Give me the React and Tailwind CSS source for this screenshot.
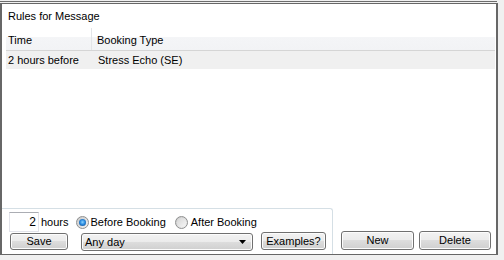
import React from "react";

const font = { fontFamily: '"Liberation Sans", Arial, sans-serif' };

const btn =
  "flex items-center justify-center rounded-[3px] border border-[#707070] bg-[linear-gradient(to_bottom,#f2f2f2_0%,#ebebeb_50%,#dddddd_50%,#cfcfcf_100%)] text-[11px] text-black shadow-[inset_0_0_0_1px_#fcfcfc]";

const Radio = ({ checked }) => (
  <div className="flex h-[13px] w-[13px] items-center justify-center rounded-full border border-[#8e8f8f] bg-[linear-gradient(135deg,#c8c8c8_0%,#f4f4f4_100%)]">
    {checked ? (
      <div className="h-[7px] w-[7px] rounded-full bg-[radial-gradient(circle_at_50%_45%,#8ad4ff_0%,#2b8be0_45%,#0d3f7a_100%)]" />
    ) : (
      <div className="h-[9px] w-[9px] rounded-full bg-[linear-gradient(135deg,#d6d6d6_0%,#f6f6f6_100%)]" />
    )}
  </div>
);

const App = () => {
  return (
    <div className="h-[260px] w-[504px] overflow-hidden bg-[#f0f0f0] leading-[13px]" style={font}>
      <div className="mt-px h-px w-[497px] bg-[#6d6d6d]" />
      <div className="mt-px flex h-[252px] w-[498px] flex-col border-x-2 border-y border-[#676767] bg-white">
        {/* Title */}
        <div className="h-[24px] pl-[6px] pt-[6px] text-[11px] text-black">Rules for Message</div>

        {/* List */}
        <div className="ml-[4px] mr-[1px] flex-1 text-[11px] text-black">
          <div className="flex h-[23px] border-b border-[#d5d5d5] bg-[linear-gradient(to_bottom,#ffffff_0%,#ffffff_40%,#f4f5f7_40%,#f2f3f5_100%)]">
            <div className="flex w-[86px] items-center border-r border-[#e3e5e8] pl-[2px] pt-[2px]">Time</div>
            <div className="flex items-center pl-[5px] pt-[2px]">Booking Type</div>
          </div>
          <div className="flex h-[18px] items-center bg-[#f0f0f0]">
            <div className="w-[87px] pl-[2px]">2 hours before</div>
            <div className="pl-[5px]">Stress Echo (SE)</div>
          </div>
        </div>

        {/* Bottom controls */}
        <div className="flex h-[46px] items-end">
          <div className="h-[46px] w-[331px] rounded-tr-[3px] border-r border-t border-[#d5dfe5] text-[11px] text-black">
            <div className="mt-[3px] flex h-[20px] items-center">
              <div className="ml-[7px] flex h-[20px] w-[30px] items-center justify-end border border-[#e2e3ea] border-t-[#abadb3] pr-[2px] text-[12px]">
                2
              </div>
              <span className="ml-[2px]">hours</span>
              <div className="ml-[7px]">
                <Radio checked />
              </div>
              <span className="ml-[2px]">Before Booking</span>
              <div className="ml-[9px]">
                <Radio />
              </div>
              <span className="ml-[3px]">After Booking</span>
            </div>
            <div className="mt-px flex items-start">
              <div className={`ml-[8px] h-[17px] w-[58px] ${btn}`}>Save</div>
              <div className={`ml-[13px] h-[18px] w-[172px] !justify-between px-[3px] ${btn}`}>
                <span>Any day</span>
                <svg width="7" height="4" viewBox="0 0 7 4" className="mr-[3px]">
                  <path d="M0 0h7L3.5 4z" fill="#000" />
                </svg>
              </div>
              <div className={`ml-[8px] mt-[-1px] h-[18px] w-[65px] ${btn}`}>Examples?</div>
            </div>
          </div>
          <div className={`mb-[4px] ml-[8px] h-[19px] w-[73px] ${btn}`}>New</div>
          <div className={`mb-[4px] ml-[5px] h-[19px] w-[72px] ${btn}`}>Delete</div>
        </div>
      </div>
    </div>
  );
};

export default App;
